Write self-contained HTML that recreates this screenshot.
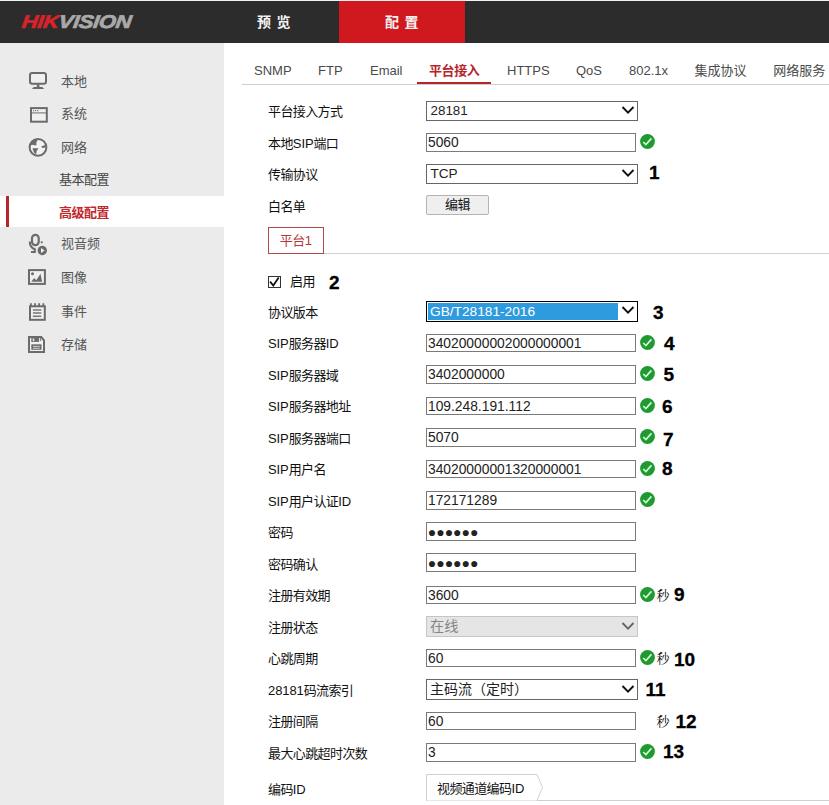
<!DOCTYPE html>
<html lang="zh-CN">
<head>
<meta charset="utf-8">
<title>配置</title>
<style>
*{box-sizing:border-box;margin:0;padding:0}
html,body{width:829px;height:805px;overflow:hidden;background:#f2f2f2}
body{position:relative;font-family:"Liberation Sans","Noto Sans CJK SC",sans-serif;font-size:13px;color:#222}
.abs{position:absolute}
#hdr{left:0;top:1px;width:829px;height:42px;background:#2c2c2c}
#hdr .red{left:339px;top:0;width:126px;height:42px;background:#d0191f}
#hdr .t{top:0;height:41px;line-height:43px;color:#f4f4f4;font-size:14px;letter-spacing:5.5px;font-weight:bold}
#side{left:0;top:43px;width:224px;height:762px;background:#ebebeb}
.mi{left:61px;font-size:13px;color:#555;height:20px;line-height:20px;white-space:nowrap}
.sub{left:59px;font-size:13px;color:#444;height:20px;line-height:20px;white-space:nowrap;letter-spacing:-0.5px}
#sel{left:0;top:196px;width:224px;height:31px;background:#fff}
#selbar{left:6px;top:196px;width:3px;height:31px;background:#b5262b}
.tab{top:61px;height:20px;line-height:20px;font-size:13px;color:#4a4a4a;white-space:nowrap}
.lbl{left:268px;height:20px;line-height:20px;font-size:13px;color:#111;white-space:nowrap;letter-spacing:-0.6px}
.inp{left:426px;width:210px;height:19px;border:1px solid #7a7a7a;background:#fff;font-size:13.8px;line-height:17px;padding-left:1px;color:#222;white-space:nowrap;overflow:hidden}
.selb{left:426px;width:212px;height:21px;border:1px solid #666;background:#fff;font-size:13.6px;line-height:19px;padding-left:3.5px;color:#222;white-space:nowrap;overflow:hidden}
.l{letter-spacing:-0.1px}
.num{font-weight:bold;font-size:19px;color:#000;height:22px;line-height:22px;white-space:nowrap;-webkit-text-stroke:0.3px #000}
.sec{font-family:"Liberation Serif","Noto Serif CJK SC",serif;font-size:13px;color:#111;height:18px;line-height:18px}
.ok{width:15px;height:15px}
</style>
</head>
<body>
<div id="hdr" class="abs">
  <div class="abs red"></div>
  <div class="abs t" style="left:257px">预览</div>
  <div class="abs t" style="left:385px">配置</div>
</div>
<div class="abs" style="left:224px;top:43px;width:605px;height:762px;background:#fff"></div>
<div id="side" class="abs"></div>
<div id="sel" class="abs"></div>
<div id="selbar" class="abs"></div>

<!-- logo -->
<div class="abs" id="logo" style="left:22px;top:10px;height:24px;line-height:24px;font-size:18.5px;font-weight:bold;font-style:italic;letter-spacing:-0.3px;white-space:nowrap;transform-origin:0 50%;transform:scaleX(1.19) skewX(-6deg);-webkit-text-stroke:0.7px"><span style="color:#d8232a">HIK</span><span style="color:#a9a9a9">VISION</span></div>

<!-- sidebar icons -->
<svg class="abs" style="left:0;top:0" width="224" height="400" viewBox="0 0 224 400" fill="none" stroke="#6b6b6b" stroke-width="2">
  <!-- monitor -->
  <rect x="30" y="73" width="16" height="10.7" rx="2.2" fill="#f0f0f0"/>
  <path d="M36.8 84.5h2.6v2.6h2.9l1.8 1.9h-12.2l1.9-1.9h3z" fill="#6b6b6b" stroke="none"/>
  <!-- system -->
  <rect x="31" y="108.1" width="15.8" height="13.6" fill="#f0f0f0"/>
  <path d="M32 112.9h14" stroke-width="1.3" stroke="#8a8a8a"/>
  <path d="M33 110.6h1.1M35.1 110.6h1.1M37.2 110.6h1.1" stroke-width="1.1" stroke="#7a7a7a"/>
  <!-- globe -->
  <circle cx="38" cy="147.3" r="8.4" fill="#f2f2f2"/>
  <path d="M30.3 145.2C30 141.5 33.2 138.8 37.6 138.9L37.3 141l-1 1.6.2 2.4-1.6.6-1.6-.9zM32.4 148.2h6.2l-1.9 2.6-.6 4-2.2-2.6zM41.3 146.4l3.8-1.3.4 2.4-3.3.5z" fill="#6b6b6b" stroke="none"/>
  <!-- mic -->
  <rect x="32" y="234.8" width="6.7" height="10.3" rx="3.3" stroke-width="2.2"/>
  <path d="M29.8 241.6c0 4.2 1.6 6.6 5 7.6v2.8M31 252h4.8"/>
  <circle cx="42.3" cy="250.5" r="5.6" fill="#ebebeb" stroke="none"/>
  <circle cx="42.3" cy="250.5" r="4.7" fill="#6b6b6b" stroke="none"/>
  <path d="M41 248.1v4.8l3.7-2.4z" fill="#efefef" stroke="none"/>
  <circle cx="41.7" cy="242.3" r="1.15" fill="#6b6b6b" stroke="none"/>
  <!-- image -->
  <rect x="29" y="270.1" width="15.9" height="13.8" fill="#f0f0f0"/>
  <path d="M31.3 281.7l2.8-3.6 2.2 2.2 4.2-6.6 1.6 8z" fill="#6b6b6b" stroke="none"/>
  <circle cx="32.5" cy="273.7" r="1.5" fill="#6b6b6b" stroke="none"/>
  <!-- event -->
  <rect x="30" y="306.3" width="14.8" height="13.5" fill="#f0f0f0"/>
  <path d="M30.9 303.2v3M35 303.2v3M39.1 303.2v3M43.4 303.2v3" stroke-width="1.8"/>
  <path d="M32.9 309.9h8.4M32.9 313.1h8.4M32.9 316.3h8.4" stroke-width="1.5" stroke="#777"/>
  <!-- storage -->
  <path d="M29 337h12.3l2.7 3.4v11.6h-15z" fill="#f0f0f0"/>
  <path d="M31.3 337h7.8v4.9h-7.8z" fill="#6b6b6b" stroke="none"/>
  <path d="M33.5 338.5v2.6" stroke="#e8e8e8" stroke-width="1.5"/>
  <path d="M40.7 337.5v3.5" stroke-width="1"/>
  <rect x="31.3" y="344.3" width="10.2" height="5.5" fill="#6b6b6b" stroke="none"/>
  <path d="M33 346.4h6.8M33 348.3h6.8" stroke="#d8d8d8" stroke-width="0.9"/>
</svg>

<!-- sidebar text -->
<div class="abs mi" style="top:72px">本地</div>
<div class="abs mi" style="top:104px">系统</div>
<div class="abs mi" style="top:138px">网络</div>
<div class="abs sub" style="top:170px">基本配置</div>
<div class="abs sub" style="top:203px;color:#c0282d;font-weight:bold">高级配置</div>
<div class="abs mi" style="top:234px">视音频</div>
<div class="abs mi" style="top:268px">图像</div>
<div class="abs mi" style="top:302px">事件</div>
<div class="abs mi" style="top:335px">存储</div>

<!-- tabs -->
<div class="abs" style="left:242px;top:84px;width:587px;height:1px;background:#cfcfcf"></div>
<div class="abs" style="left:417px;top:82px;width:74px;height:2px;background:#b5262b"></div>
<div class="abs tab" style="left:254px">SNMP</div>
<div class="abs tab" style="left:318px">FTP</div>
<div class="abs tab" style="left:370px">Email</div>
<div class="abs tab" style="left:429px;top:61px;color:#b5262b;font-weight:bold;letter-spacing:-0.4px">平台接入</div>
<div class="abs tab" style="left:507px">HTTPS</div>
<div class="abs tab" style="left:576px">QoS</div>
<div class="abs tab" style="left:629px">802.1x</div>
<div class="abs tab" style="left:694.5px;top:61px">集成协议</div>
<div class="abs tab" style="left:773.3px;top:61px">网络服务</div>

<div class="abs lbl" style="top:101.7px">平台接入方式</div>
<div class="abs selb" style="top:101px;height:20px;line-height:18px;font-size:13.4px">28181</div><svg class="abs" style="left:620.8px;top:105.0px" width="14" height="10" viewBox="0 0 14 10"><path d="M1.5 2L7 7.7L12.5 2" fill="none" stroke="#111" stroke-width="1.9"/></svg>
<div class="abs lbl" style="top:133.5px">本地<span class="l">SIP</span>端口</div>
<div class="abs inp" style="top:133px;height:19px;line-height:17px;">5060</div>
<svg class="abs ok" style="left:639.7px;top:133.9px" viewBox="0 0 15 15"><circle cx="7.5" cy="7.5" r="7.4" fill="#1f9a30"/><path d="M3.2 8l2.7 2.5 5.5-6.1" fill="none" stroke="#d4ffd9" stroke-width="1.6"/></svg>
<div class="abs lbl" style="top:165.0px">传输协议</div>
<div class="abs selb" style="top:164px;height:20px;line-height:18px;">TCP</div><svg class="abs" style="left:620.8px;top:168.0px" width="14" height="10" viewBox="0 0 14 10"><path d="M1.5 2L7 7.7L12.5 2" fill="none" stroke="#111" stroke-width="1.9"/></svg>
<div class="abs num" style="left:649px;top:161.5px">1</div>
<div class="abs lbl" style="top:196.5px">白名单</div>
<div class="abs" style="left:426px;top:195px;width:63px;height:20px;border:1px solid #b4b4b4;border-radius:2px;background:#efefef;text-align:center;line-height:18px;font-size:13px;color:#111;letter-spacing:-0.5px">编辑</div>
<div class="abs" style="left:324px;top:253px;width:505px;height:1px;background:#cfcfcf"></div>
<div class="abs" style="left:268px;top:227px;width:56px;height:27px;border:1px solid #b04a4a;background:#fff;text-align:center;line-height:25px;font-size:13px;color:#b5383c;letter-spacing:-0.5px;padding-right:1px">平台1</div>
<div class="abs" style="left:268.4px;top:275.8px;width:12.3px;height:12.3px;border:1px solid #333;background:#fff"></div>
<svg class="abs" style="left:268.4px;top:275.8px" width="13" height="13" viewBox="0 0 13 13"><path d="M2.1 5.6l3.2 4 5.4-8" fill="none" stroke="#111" stroke-width="1.8"/></svg>
<div class="abs lbl" style="left:290px;top:271.5px">启用</div>
<div class="abs num" style="left:329px;top:271.5px">2</div>
<div class="abs lbl" style="top:302.5px">协议版本</div>
<div class="abs lbl" style="top:334.0px"><span class="l">SIP</span>服务器<span class="l">ID</span></div>
<div class="abs lbl" style="top:365.5px"><span class="l">SIP</span>服务器域</div>
<div class="abs lbl" style="top:397.0px"><span class="l">SIP</span>服务器地址</div>
<div class="abs lbl" style="top:428.5px"><span class="l">SIP</span>服务器端口</div>
<div class="abs lbl" style="top:460.0px"><span class="l">SIP</span>用户名</div>
<div class="abs lbl" style="top:491.5px"><span class="l">SIP</span>用户认证<span class="l">ID</span></div>
<div class="abs lbl" style="top:523.0px">密码</div>
<div class="abs lbl" style="top:554.5px">密码确认</div>
<div class="abs lbl" style="top:586.0px">注册有效期</div>
<div class="abs lbl" style="top:617.5px">注册状态</div>
<div class="abs lbl" style="top:649.0px">心跳周期</div>
<div class="abs lbl" style="top:680.5px"><span class="l">28181</span>码流索引</div>
<div class="abs lbl" style="top:712.0px">注册间隔</div>
<div class="abs lbl" style="top:743.5px">最大心跳超时次数</div>
<div class="abs lbl" style="top:780.2px">编码<span class="l">ID</span></div>
<div class="abs" style="left:426px;top:301px;width:212px;height:21px;border:1px solid #000;background:#fff"></div>
<div class="abs" style="left:428px;top:303px;width:190px;height:17px;background:#2f9bdf;color:#fff;font-size:13.7px;line-height:17px;padding-left:2px;white-space:nowrap">GB/T28181-2016</div>
<svg class="abs" style="left:620.8px;top:305px" width="14" height="10" viewBox="0 0 14 10"><path d="M1.5 2L7 7.7L12.5 2" fill="none" stroke="#111" stroke-width="1.9"/></svg>
<div class="abs num" style="left:653px;top:301.5px">3</div>
<div class="abs inp" style="top:334px;height:18px;line-height:17px;">34020000002000000001</div>
<div class="abs inp" style="top:365px;height:19px;line-height:17px;">3402000000</div>
<div class="abs inp" style="top:397px;height:18px;line-height:17px;">109.248.191.112</div>
<div class="abs inp" style="top:428px;height:19px;line-height:17px;">5070</div>
<div class="abs inp" style="top:460px;height:18px;line-height:17px;">34020000001320000001</div>
<div class="abs inp" style="top:491px;height:19px;line-height:17px;">172171289</div>
<div class="abs inp" style="top:522px;height:19px;line-height:17px;font-size:14px;letter-spacing:0;padding-left:0.75px;padding-top:1px">●●●●●●</div>
<div class="abs inp" style="top:553px;height:19px;line-height:17px;font-size:14px;letter-spacing:0;padding-left:0.75px;padding-top:1px">●●●●●●</div>
<div class="abs inp" style="top:586px;height:18px;line-height:17px;">3600</div>
<div class="abs inp" style="top:649px;height:18px;line-height:17px;">60</div>
<div class="abs inp" style="top:712px;height:18px;line-height:17px;">60</div>
<div class="abs inp" style="top:743px;height:19px;line-height:17px;">3</div>
<svg class="abs ok" style="left:639.7px;top:334.75px" viewBox="0 0 15 15"><circle cx="7.5" cy="7.5" r="7.4" fill="#1f9a30"/><path d="M3.2 8l2.7 2.5 5.5-6.1" fill="none" stroke="#d4ffd9" stroke-width="1.6"/></svg>
<svg class="abs ok" style="left:639.7px;top:366.25px" viewBox="0 0 15 15"><circle cx="7.5" cy="7.5" r="7.4" fill="#1f9a30"/><path d="M3.2 8l2.7 2.5 5.5-6.1" fill="none" stroke="#d4ffd9" stroke-width="1.6"/></svg>
<svg class="abs ok" style="left:639.7px;top:397.75px" viewBox="0 0 15 15"><circle cx="7.5" cy="7.5" r="7.4" fill="#1f9a30"/><path d="M3.2 8l2.7 2.5 5.5-6.1" fill="none" stroke="#d4ffd9" stroke-width="1.6"/></svg>
<svg class="abs ok" style="left:639.7px;top:429.25px" viewBox="0 0 15 15"><circle cx="7.5" cy="7.5" r="7.4" fill="#1f9a30"/><path d="M3.2 8l2.7 2.5 5.5-6.1" fill="none" stroke="#d4ffd9" stroke-width="1.6"/></svg>
<svg class="abs ok" style="left:639.7px;top:460.75px" viewBox="0 0 15 15"><circle cx="7.5" cy="7.5" r="7.4" fill="#1f9a30"/><path d="M3.2 8l2.7 2.5 5.5-6.1" fill="none" stroke="#d4ffd9" stroke-width="1.6"/></svg>
<svg class="abs ok" style="left:639.7px;top:492.25px" viewBox="0 0 15 15"><circle cx="7.5" cy="7.5" r="7.4" fill="#1f9a30"/><path d="M3.2 8l2.7 2.5 5.5-6.1" fill="none" stroke="#d4ffd9" stroke-width="1.6"/></svg>
<svg class="abs ok" style="left:639.7px;top:586.75px" viewBox="0 0 15 15"><circle cx="7.5" cy="7.5" r="7.4" fill="#1f9a30"/><path d="M3.2 8l2.7 2.5 5.5-6.1" fill="none" stroke="#d4ffd9" stroke-width="1.6"/></svg>
<svg class="abs ok" style="left:639.7px;top:649.75px" viewBox="0 0 15 15"><circle cx="7.5" cy="7.5" r="7.4" fill="#1f9a30"/><path d="M3.2 8l2.7 2.5 5.5-6.1" fill="none" stroke="#d4ffd9" stroke-width="1.6"/></svg>
<svg class="abs ok" style="left:639.7px;top:744.25px" viewBox="0 0 15 15"><circle cx="7.5" cy="7.5" r="7.4" fill="#1f9a30"/><path d="M3.2 8l2.7 2.5 5.5-6.1" fill="none" stroke="#d4ffd9" stroke-width="1.6"/></svg>
<div class="abs num" style="left:664px;top:332.8px">4</div>
<div class="abs num" style="left:663.5px;top:363.5px">5</div>
<div class="abs num" style="left:662px;top:395.7px">6</div>
<div class="abs num" style="left:663px;top:428.5px">7</div>
<div class="abs num" style="left:662px;top:457.5px">8</div>
<div class="abs num" style="left:674px;top:583.6px">9</div>
<div class="abs num" style="left:674px;top:648.5px">10</div>
<div class="abs num" style="left:645.5px;top:678.8px">11</div>
<div class="abs num" style="left:675.5px;top:710.9px">12</div>
<div class="abs num" style="left:663px;top:740.7px">13</div>
<div class="abs sec" style="left:656.5px;top:586.75px">秒</div>
<div class="abs sec" style="left:656.5px;top:649.75px">秒</div>
<div class="abs sec" style="left:656.5px;top:712.75px">秒</div>
<div class="abs selb" style="top:616px;height:21px;border-color:#c6c6c6;background:#e5e5e5;color:#858585;font-size:14.2px;padding-left:3px;line-height:19px">在线</div><svg class="abs" style="left:620.8px;top:620.5px" width="14" height="10" viewBox="0 0 14 10"><path d="M1.5 2L7 7.7L12.5 2" fill="none" stroke="#666" stroke-width="1.9"/></svg>
<div class="abs selb" style="top:679px;height:21px;line-height:19px;font-size:14px;padding-left:3px;line-height:19px">主码流（定时）</div><svg class="abs" style="left:620.8px;top:683.5px" width="14" height="10" viewBox="0 0 14 10"><path d="M1.5 2L7 7.7L12.5 2" fill="none" stroke="#111" stroke-width="1.9"/></svg>
<div class="abs" style="left:426px;top:800px;width:403px;height:1px;background:#cfcfcf"></div>
<svg class="abs" style="left:426px;top:774px" width="120" height="27" viewBox="0 0 120 27"><path d="M0.5 26.5V0.5H111L116.5 13.5L111 26.5" fill="#fff" stroke="#cfcfcf"/></svg>
<div class="abs lbl" style="left:437px;top:778.5px">视频通道编码<span class="l">ID</span></div>
</body>
</html>
